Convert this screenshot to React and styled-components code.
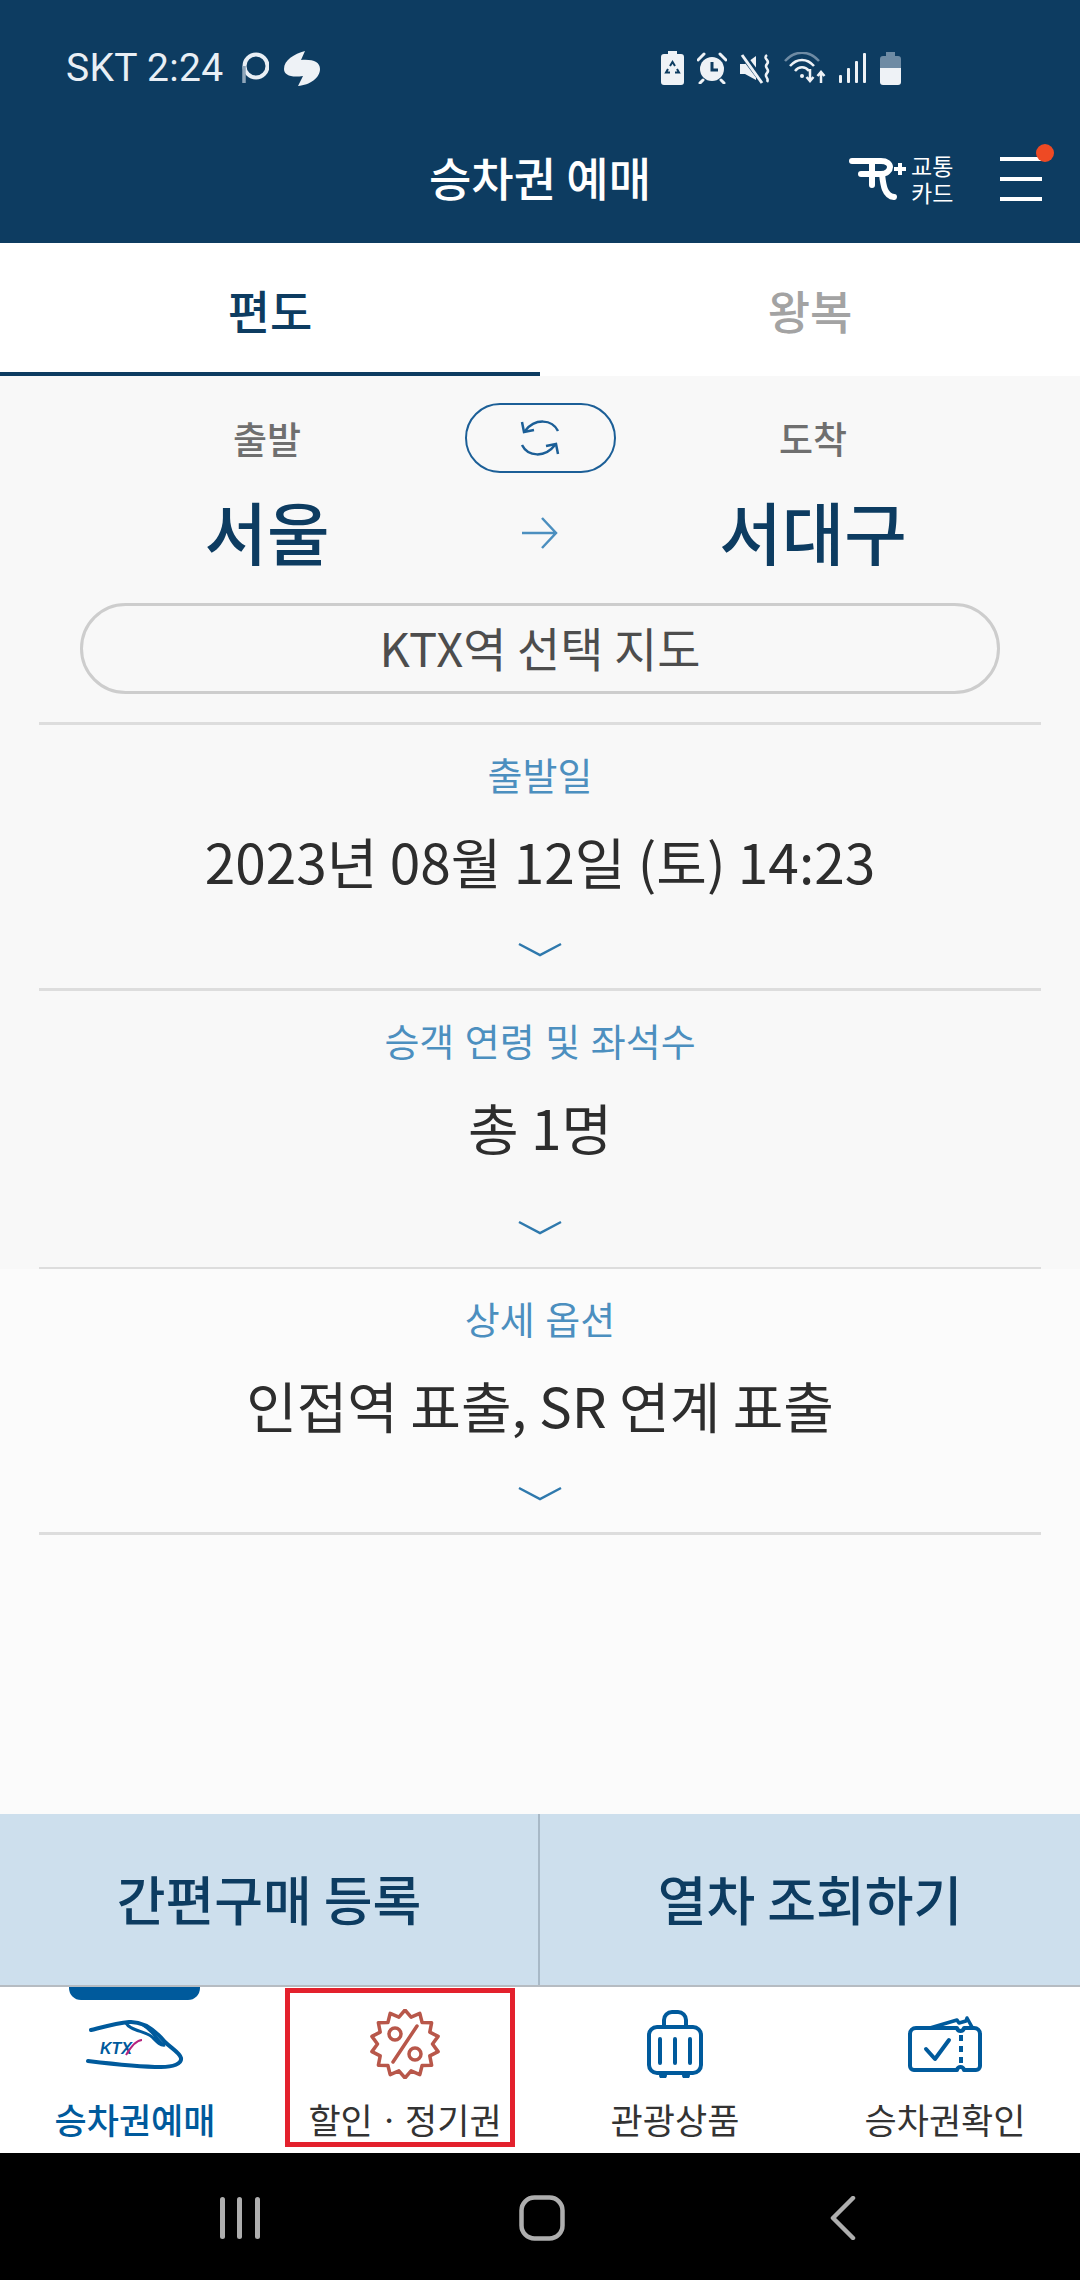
import React from 'react';
import styled, { createGlobalStyle } from 'styled-components';

const navy = '#0d3c61';
const blue = '#005a9c';

const Global = createGlobalStyle`
  html, body { margin: 0; padding: 0; background: #000; }
  * { box-sizing: border-box; }
  body { font-family: "Noto Sans CJK KR", "Noto Sans", sans-serif; }
`;

const Screen = styled.div`
  width: 1080px;
  height: 2280px;
  display: flex;
  flex-direction: column;
  background: #fbfbfb;
  overflow: hidden;
`;

const Header = styled.header`
  height: 243px;
  flex: none;
  background: ${navy};
  color: #fff;
`;

const StatusBar = styled.div`
  height: 92px;
  margin-top: 22px;
  display: flex;
  align-items: center;
  padding: 0 179px 0 66px;
  color: #e9eff5;
`;

const StatusText = styled.span`
  font-family: Roboto, sans-serif;
  font-size: 39px;
  line-height: 1;
  letter-spacing: 0.3px;
  margin-right: 3px;
`;

const StatusLeft = styled.div`
  display: flex;
  align-items: center;
  gap: 15px;
  flex: 1;
`;

const StatusRight = styled.div`
  display: flex;
  align-items: center;
  gap: 13px;
`;

const TitleRow = styled.div`
  height: 129px;
  display: grid;
  grid-template-columns: 1fr auto 1fr;
  align-items: center;
`;

const Title = styled.h1`
  grid-column: 2;
  margin: 0;
  font-size: 46px;
  font-weight: 500;
  line-height: 1;
  padding-bottom: 6px;
`;

const HeaderActions = styled.div`
  justify-self: end;
  display: flex;
  align-items: center;
  padding-right: 38px;
`;

const CardText = styled.div`
  font-size: 23px;
  line-height: 27px;
  width: 44px;
  margin: 0 45px 0 4px;
  color: #fff;
  white-space: nowrap;
`;

const Burger = styled.div`
  position: relative;
  width: 42px;
  height: 44px;
  display: flex;
  flex-direction: column;
  justify-content: space-between;
`;

const BurgerLine = styled.span`
  height: 4px;
  background: #fff;
`;

const RedDot = styled.span`
  position: absolute;
  top: -13px;
  right: -12px;
  width: 18px;
  height: 18px;
  border-radius: 50%;
  background: #ee4a24;
`;

const Tabs = styled.div`
  height: 133px;
  flex: none;
  display: grid;
  grid-template-columns: 1fr 1fr;
  background: #fff;
`;

const Tab = styled.div`
  display: flex;
  align-items: center;
  justify-content: center;
  padding-top: 2px;
  font-size: 46px;
  font-weight: 500;
  color: ${p => (p.$active ? navy : '#a3a3a3')};
  border-bottom: 4px solid ${p => (p.$active ? navy : '#fff')};
`;

const Upper = styled.main`
  height: 893px;
  flex: none;
  padding: 27px 39px 0;
  background: #f8f8f8;
`;

const Lower = styled.div`
  flex: 1;
  padding: 0 39px;
  background: #fbfbfb;
`;

const RouteGrid = styled.div`
  display: grid;
  grid-template-columns: 456px minmax(0, 1fr) 456px;
`;

const RouteLabel = styled.div`
  height: 70px;
  display: flex;
  align-items: center;
  justify-content: center;
  font-size: 37px;
  font-weight: 500;
  color: #6f6f6f;
`;

const Swap = styled.div`
  justify-self: center;
  width: 151px;
  height: 70px;
  flex: none;
  border: 2.5px solid #1c5f97;
  border-radius: 35px;
  display: flex;
  align-items: center;
  justify-content: center;
`;

const Station = styled.div`
  height: 110px;
  margin-top: 3px;
  display: flex;
  align-items: center;
  justify-content: center;
  font-size: 68px;
  font-weight: 500;
  line-height: 1;
  color: ${navy};
`;

const ArrowCell = styled.div`
  display: flex;
  align-items: center;
  justify-content: center;
  margin-top: 6px;
`;

const MapPill = styled.div`
  height: 91px;
  margin: 17px 41px 28px;
  border: 3px solid #cdcdcd;
  border-radius: 46px;
  display: flex;
  align-items: center;
  justify-content: center;
  font-size: 47px;
  color: #4d4d4d;
  padding-bottom: 4px;
`;

const Row = styled.section`
  height: ${p => (p.$tall ? 279 : p.$bare ? 263 : 266)}px;
  border-top: ${p => (p.$bare ? 'none' : '3px solid #dddddd')};
  display: flex;
  flex-direction: column;
  align-items: center;
  padding-top: 27px;
`;

const RowLabel = styled.div`
  font-size: 38px;
  line-height: 44px;
  word-spacing: 2px;
  color: #4c8fbf;
`;

const RowValue = styled.div`
  margin-top: 24px;
  font-size: 55px;
  line-height: 80px;
  color: #2d2d2d;
  white-space: nowrap;
`;

const Chevron = styled.svg`
  margin-top: ${p => (p.$tall ? 54 : 42)}px;
`;

const EndLine = styled.div`
  height: 3px;
  background: #dddddd;
`;

const Actions = styled.div`
  height: 173px;
  flex: none;
  display: grid;
  grid-template-columns: 538px 1fr;
  background: #cddfed;
  border-bottom: 2px solid #b6bcc2;
`;

const ActionButton = styled.div`
  display: flex;
  align-items: center;
  justify-content: center;
  font-size: 53px;
  font-weight: 500;
  color: ${navy};
  padding-bottom: 4px;
  & + & {
    border-left: 2px solid #a8b9c7;
  }
`;

const Nav = styled.nav`
  position: relative;
  height: 166px;
  flex: none;
  display: grid;
  grid-template-columns: repeat(4, 1fr);
  background: #fff;
`;

const NavItem = styled.div`
  display: flex;
  flex-direction: column;
  align-items: center;
  color: ${p => (p.$active ? blue : '#333')};
  font-size: 35px;
  font-weight: ${p => (p.$active ? 500 : 400)};
`;

const NavIcon = styled.div`
  height: 98px;
  display: flex;
  align-items: center;
  justify-content: center;
  padding-top: 16px;
`;

const NavLabel = styled.div`
  line-height: 44px;
  margin-top: 12px;
  white-space: nowrap;
`;

const ActivePill = styled.span`
  position: absolute;
  top: 0;
  left: 69px;
  width: 131px;
  height: 13px;
  background: ${blue};
  border-radius: 0 0 12px 12px;
`;

const Highlight = styled.span`
  position: absolute;
  top: 1px;
  left: 285px;
  width: 230px;
  height: 159px;
  border: 5px solid #e3212d;
`;

const SystemBar = styled.div`
  height: 127px;
  flex: none;
  background: #000;
  display: grid;
  grid-template-columns: repeat(3, 301.5px);
  justify-content: center;
  justify-items: center;
  align-items: center;
  padding: 2px 0 0 3px;
`;

const badgePoints = () => {
  const pts = [];
  const n = 14;
  for (let i = 0; i < n * 2; i++) {
    const r = i % 2 ? 27.5 : 34;
    const a = (Math.PI * i) / n - Math.PI / 2;
    pts.push(`${(35 + r * Math.cos(a)).toFixed(1)},${(35 + r * Math.sin(a)).toFixed(1)}`);
  }
  return pts.join(' ');
};

const CircleStatus = () => (
  <svg width="28" height="32" viewBox="0 0 28 32" fill="none">
    <circle cx="15" cy="14" r="11.500" stroke="#e9eff5" strokeWidth="4" />
    <path d="M3 14v17" stroke="#8fa6ba" strokeWidth="3.500" />
  </svg>
);

const BlobStatus = () => (
  <svg width="36" height="35" viewBox="0 0 36 35">
    <path d="M21 0C10 3 0 9 0 18c0 6 7 9 19 7l-5 10c12-1 22-8 22-17 0-7-7-10-19-9z" fill="#eef2f6" />
  </svg>
);

const BatterySaver = () => (
  <svg width="23" height="34" viewBox="0 0 23 34">
    <path d="M7 0h9v3h4a3 3 0 0 1 3 3v25a3 3 0 0 1-3 3H3a3 3 0 0 1-3-3V6a3 3 0 0 1 3-3h4z" fill="#eef2f6" />
    <path d="M9 15l2.500-4 2.500 4M16 18l2 3.500h-4M9 21.500H5l2-3.500" fill="none" stroke={navy} strokeWidth="2" />
  </svg>
);

const Alarm = () => (
  <svg width="30" height="32" viewBox="0 0 30 32">
    <circle cx="15" cy="17" r="12" fill="#eef2f6" />
    <path d="M1 8l6-6M29 8l-6-6M6 28l-3 3M24 28l3 3" stroke="#eef2f6" strokeWidth="3" strokeLinecap="round" />
    <path d="M15 10v8h6" fill="none" stroke={navy} strokeWidth="3" />
  </svg>
);

const MuteVibrate = () => (
  <svg width="31" height="31" viewBox="0 0 31 31">
    <path d="M0 11h5l11-8v24L5 21H0z" fill="#eef2f6" />
    <path d="M2 1l21 28" stroke={navy} strokeWidth="6" />
    <path d="M2 2l20 28" stroke="#eef2f6" strokeWidth="3" />
    <path d="M27 2c-5 4 4 5 0 9-4 4 4 5 0 9-4 4 3 5 0 9" fill="none" stroke="#eef2f6" strokeWidth="2.500" />
  </svg>
);

const Wifi = () => (
  <svg width="42" height="32" viewBox="0 0 42 32" fill="none">
    <path d="M1 9c10-11 24-11 34 0" stroke="#6e8ba4" strokeWidth="2.500" />
    <path d="M6 14c7-8 17-8 24 0M11 19c4-5 10-5 14 0" stroke="#eef2f6" strokeWidth="2.500" />
    <circle cx="18" cy="24" r="2" fill="#eef2f6" />
    <path d="M26 17v11M22.500 25l3.500 4 3.500-4M37 31V20M33.500 24l3.500-4 3.500 4" stroke="#eef2f6" strokeWidth="2.500" />
  </svg>
);

const Signal = () => (
  <svg width="28" height="30" viewBox="0 0 28 30" fill="#eef2f6">
    <rect x="0" y="22" width="3" height="8" rx="1" />
    <rect x="8" y="15" width="3" height="15" rx="1" />
    <rect x="16" y="8" width="3" height="22" rx="1" />
    <rect x="24" y="0" width="3" height="30" rx="1" />
  </svg>
);

const Battery = () => (
  <svg width="21" height="33" viewBox="0 0 21 33">
    <path d="M6 0h9v4h3a3 3 0 0 1 3 3v9H0V7a3 3 0 0 1 3-3h3z" fill="#6e8ba4" />
    <path d="M0 16h21v14a3 3 0 0 1-3 3H3a3 3 0 0 1-3-3z" fill="#eef2f6" />
  </svg>
);

const TrLogo = () => (
  <svg width="58" height="42" viewBox="0 0 58 42" fill="none" stroke="#fff" strokeWidth="6" strokeLinecap="round">
    <path d="M3 3h29c6 0 9 3 9 6s-3 7-9 7H12" />
    <path d="M23 4v23M33 16c1 9 2 22 12 23" />
    <path d="M45 11h12M51 5v12" strokeWidth="4" strokeLinecap="butt" />
  </svg>
);

const SwapIcon = () => (
  <svg width="44" height="36" viewBox="0 0 44 36" fill="none" stroke="#1c5f97" strokeWidth="2.500">
    <path d="M40 11C34-1 17-2 7 11" />
    <path d="M4 2l2 10 10-2" />
    <path d="M4 25c6 12 23 13 33 0" />
    <path d="M40 34l-2-10-10 2" />
  </svg>
);

const ArrowIcon = () => (
  <svg width="36" height="32" viewBox="0 0 36 32" fill="none" stroke="#4c8fbf" strokeWidth="2.500">
    <path d="M0 16h34M20 1l14 15-14 15" />
  </svg>
);

const ChevronIcon = ({ tall }) => (
  <Chevron $tall={tall} width="44" height="16" viewBox="0 0 44 16" fill="none" stroke="#2f79ad" strokeWidth="2.500">
    <path d="M1 2l21 11L43 2" />
  </Chevron>
);

const TrainIcon = () => (
  <svg width="98" height="50" viewBox="0 0 98 50" fill="none">
    <path d="M5 11c12-3 26-7 38-8 14-1 26 8 36 20 6 6 15 11 16 16 1 6-8 9-20 9-20 0-48-3-73-6" stroke={blue} strokeWidth="4" strokeLinecap="round" />
    <path d="M40 4c4 8 20 8 26 14 4 4 8 9 13 8-6-1-10-13-22-20" stroke={blue} strokeWidth="3" />
    <text x="14" y="35" fontFamily="Liberation Sans, sans-serif" fontSize="16" fontWeight="700" fontStyle="italic" fill={blue}>KTX</text>
    <path d="M40 36C46 26 52 21 56 21" stroke="#b5247e" strokeWidth="2" />
  </svg>
);

const PercentIcon = () => (
  <svg width="70" height="70" viewBox="0 0 70 70" fill="none" stroke="#b8574a" strokeWidth="3.500" strokeLinejoin="round">
    <polygon points={badgePoints()} />
    <circle cx="25" cy="25" r="6" />
    <circle cx="45" cy="45" r="6" />
    <path d="M47 17 23 53" strokeLinecap="round" />
  </svg>
);

const SuitcaseIcon = () => (
  <svg width="56" height="68" viewBox="0 0 56 68" fill="none" stroke={blue} strokeWidth="4">
    <path d="M17 17V10a8 8 0 0 1 8-8h6a8 8 0 0 1 8 8v7" />
    <rect x="2" y="17" width="52" height="46" rx="8" />
    <path d="M13 29v24M28 29v24M43 29v24" strokeLinecap="round" />
    <circle cx="16" cy="65" r="2" fill={blue} />
    <circle cx="39" cy="65" r="2" fill={blue} />
  </svg>
);

const TicketIcon = () => (
  <svg width="74" height="58" viewBox="0 0 74 58" fill="none" stroke={blue} strokeWidth="4" strokeLinejoin="round">
    <path d="M8 13h41c1 4 6 4 7 0h10a6 6 0 0 1 6 6v32a4 4 0 0 1-4 4H56c-1-4-6-4-7 0H6a4 4 0 0 1-4-4V19a6 6 0 0 1 6-6z" />
    <path d="M22 13 49 5l2 3 7-2 1-3 5 9" strokeWidth="3.500" />
    <path d="M18 34l9 10 14-19" strokeLinecap="round" />
    <path d="M53 20v31" strokeDasharray="6 5" />
  </svg>
);

const Recents = () => (
  <svg width="41" height="44" viewBox="0 0 41 44" fill="#aeaeae">
    <rect x="0" y="1" width="5" height="42" rx="2.500" />
    <rect x="17" y="1" width="5" height="42" rx="2.500" />
    <rect x="35" y="1" width="5" height="42" rx="2.500" />
  </svg>
);

const Home = () => (
  <svg width="46" height="46" viewBox="0 0 46 46" fill="none" stroke="#aeaeae" strokeWidth="4.500">
    <rect x="2.500" y="2.500" width="41" height="41" rx="13" />
  </svg>
);

const Back = () => (
  <svg width="26" height="44" viewBox="0 0 26 44" fill="none" stroke="#aeaeae" strokeWidth="4.500" strokeLinecap="round" strokeLinejoin="round">
    <path d="M23 2 3 22l20 20" />
  </svg>
);

const RowBlock = ({ label, value, tall, bare }) => (
  <Row $tall={tall} $bare={bare}>
    <RowLabel>{label}</RowLabel>
    <RowValue>{value}</RowValue>
    <ChevronIcon tall={tall} />
  </Row>
);

export default function App() {
  return (
    <Screen>
      <Global />
      <Header>
        <StatusBar>
          <StatusLeft>
            <StatusText>SKT 2:24</StatusText>
            <CircleStatus />
            <BlobStatus />
          </StatusLeft>
          <StatusRight>
            <BatterySaver />
            <Alarm />
            <MuteVibrate />
            <Wifi />
            <Signal />
            <Battery />
          </StatusRight>
        </StatusBar>
        <TitleRow>
          <Title>승차권 예매</Title>
          <HeaderActions>
            <TrLogo />
            <CardText>교통<br />카드</CardText>
            <Burger>
              <BurgerLine />
              <BurgerLine />
              <BurgerLine />
              <RedDot />
            </Burger>
          </HeaderActions>
        </TitleRow>
      </Header>

      <Tabs>
        <Tab $active>편도</Tab>
        <Tab>왕복</Tab>
      </Tabs>

      <Upper>
        <RouteGrid>
          <RouteLabel>출발</RouteLabel>
          <Swap><SwapIcon /></Swap>
          <RouteLabel>도착</RouteLabel>
          <Station>서울</Station>
          <ArrowCell><ArrowIcon /></ArrowCell>
          <Station>서대구</Station>
        </RouteGrid>
        <MapPill>KTX역 선택 지도</MapPill>
        <RowBlock label="출발일" value="2023년 08월 12일 (토) 14:23" />
        <RowBlock label="승객 연령 및 좌석수" value="총 1명" tall />
        <EndLine />
      </Upper>

      <Lower>
        <RowBlock label="상세 옵션" value="인접역 표출, SR 연계 표출" bare />
        <EndLine />
      </Lower>

      <Actions>
        <ActionButton>간편구매 등록</ActionButton>
        <ActionButton>열차 조회하기</ActionButton>
      </Actions>

      <Nav>
        <ActivePill />
        <NavItem $active>
          <NavIcon><TrainIcon /></NavIcon>
          <NavLabel>승차권예매</NavLabel>
        </NavItem>
        <NavItem>
          <NavIcon><PercentIcon /></NavIcon>
          <NavLabel>할인ㆍ정기권</NavLabel>
        </NavItem>
        <NavItem>
          <NavIcon><SuitcaseIcon /></NavIcon>
          <NavLabel>관광상품</NavLabel>
        </NavItem>
        <NavItem>
          <NavIcon><TicketIcon /></NavIcon>
          <NavLabel>승차권확인</NavLabel>
        </NavItem>
        <Highlight />
      </Nav>

      <SystemBar>
        <Recents />
        <Home />
        <Back />
      </SystemBar>
    </Screen>
  );
}
